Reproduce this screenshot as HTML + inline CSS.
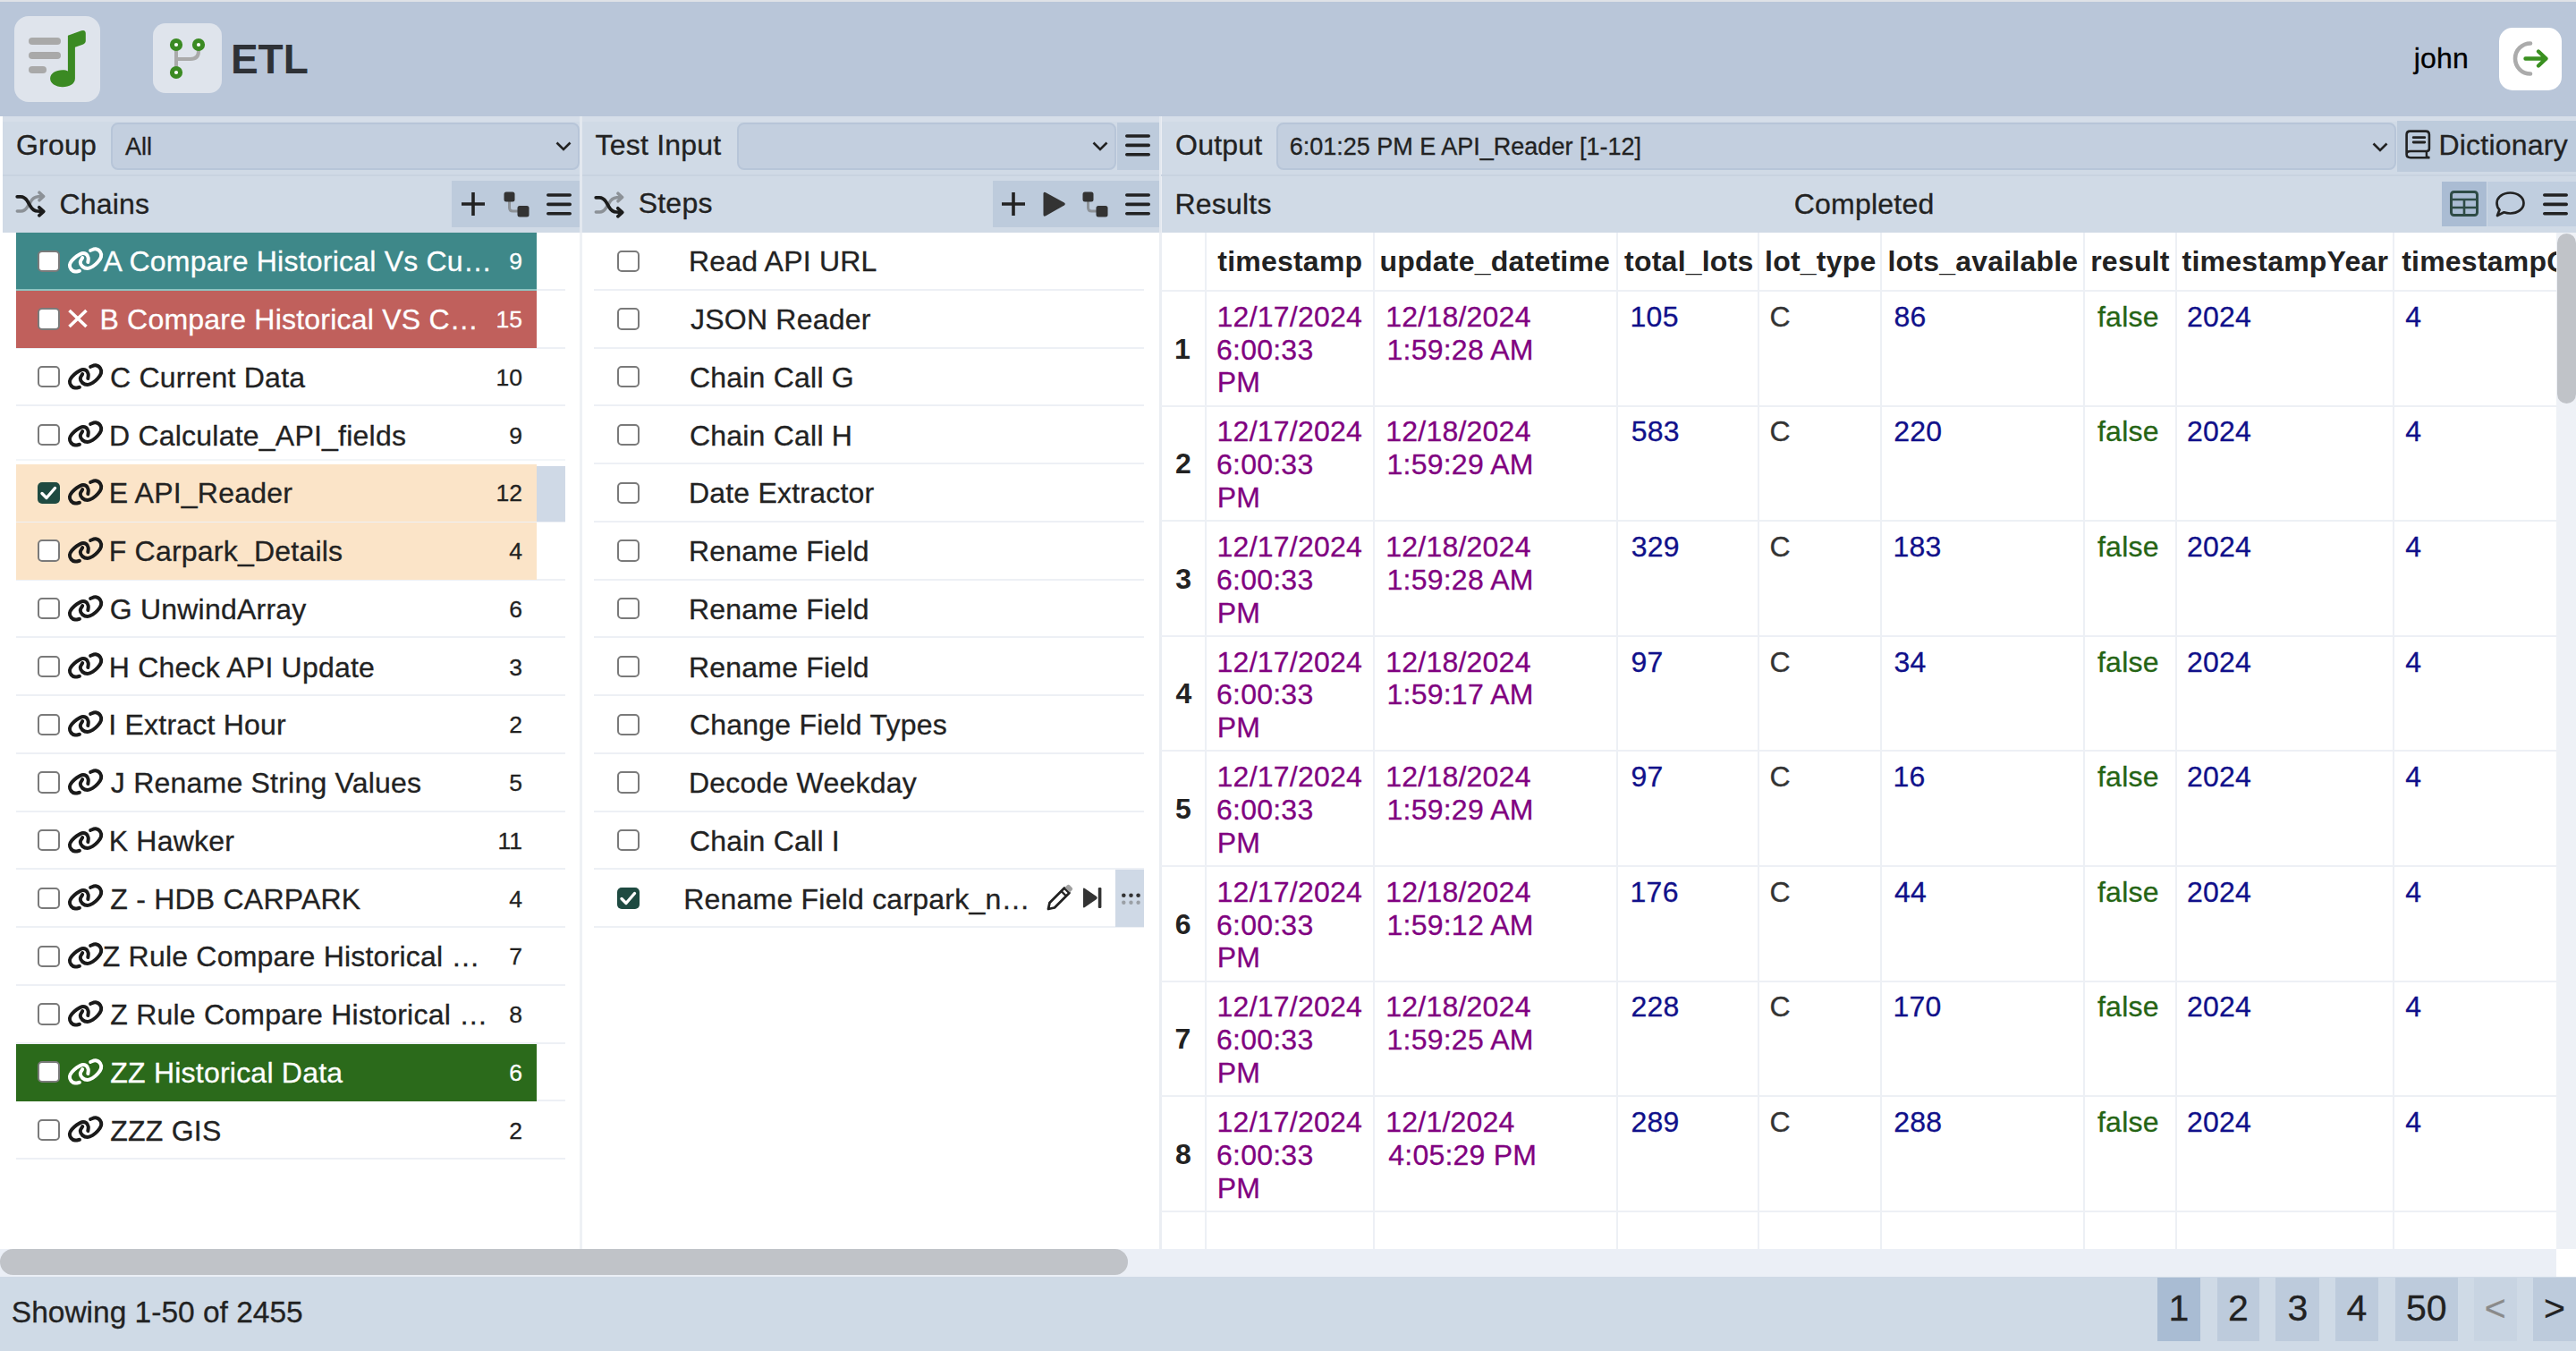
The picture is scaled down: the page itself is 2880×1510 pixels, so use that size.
<!DOCTYPE html>
<html><head><meta charset="utf-8"><style>
html,body{margin:0;padding:0;}
body{width:2880px;height:1510px;position:relative;overflow:hidden;background:#fff;font-family:"Liberation Sans",sans-serif;}
.t{position:absolute;white-space:pre;-webkit-text-stroke:0.3px currentColor;}
.r{position:absolute;}
</style></head><body>

<div class="r" style="left:0.0px;top:0.0px;width:2880.0px;height:2.0px;background:#dfe2e7;"></div>
<div class="r" style="left:0.0px;top:2.0px;width:2880.0px;height:128.0px;background:#b9c6d9;"></div>
<div class="r" style="left:16.0px;top:18.0px;width:96.0px;height:96.0px;background:#dfe4ec;border-radius:16px;"></div>
<svg class="r" style="left:16.0px;top:18.0px;width:96px;height:96px" viewBox="0 0 96 96">
<rect x="16" y="24" width="36" height="8" rx="4" fill="#a9a9a9"/>
<rect x="16" y="40" width="36" height="8" rx="4" fill="#a9a9a9"/>
<rect x="16" y="56" width="20" height="8" rx="4" fill="#a9a9a9"/>
<path d="M59.9 21.8 L75 16.2 Q79.8 14.8 79.8 19.5 L79.8 27.5 Q79.8 30.5 76.5 31.7 L67.9 34.8 L67.9 69.8 C67.9 76 61.5 79.2 54 79.2 C46 79.2 40.1 75 40.1 69.8 C40.1 64 46.5 60.3 54 60.3 C56.5 60.3 58.5 60.8 59.9 61.5 Z" fill="#3b8a23"/>
</svg>
<div class="r" style="left:171.0px;top:26.0px;width:77.0px;height:78.0px;background:#dfe4ec;border-radius:14px;"></div>
<svg class="r" style="left:171.0px;top:26.0px;width:77px;height:78px" viewBox="0 0 77 78">
<path d="M26 24 L26 55" stroke="#aaaaaa" stroke-width="4" fill="none"/>
<path d="M26 40 L42 40 Q51 40 51 31 L51 26" stroke="#aaaaaa" stroke-width="4" fill="none"/>
<circle cx="26" cy="24" r="4.6" fill="#fff" stroke="#3b8a23" stroke-width="5"/>
<circle cx="51" cy="24" r="4.6" fill="#fff" stroke="#3b8a23" stroke-width="5"/>
<circle cx="26" cy="55" r="4.6" fill="#fff" stroke="#3b8a23" stroke-width="5"/>
</svg>
<div class="t" style="left:257.9px;top:43.1px;font-size:46px;line-height:46px;font-weight:bold;-webkit-text-stroke:0;color:#2e3136;">ETL</div>
<div class="t" style="left:2698.7px;top:48.8px;font-size:32px;line-height:32px;letter-spacing:0.22px;color:#000;">john</div>
<div class="r" style="left:2794.0px;top:31.0px;width:70.0px;height:70.0px;background:#ffffff;border-radius:15px;"></div>
<svg class="r" style="left:2794.0px;top:31.0px;width:70px;height:70px" viewBox="0 0 70 70">
<path d="M35 17.5 A17 17 0 1 0 35 51.5" stroke="#ababab" stroke-width="4.6" fill="none" stroke-linecap="round"/>
<path d="M29.5 34.5 L52.5 34.5 M44 26.5 L52.5 34.5 L44 42.5" stroke="#3a9020" stroke-width="4.4" fill="none" stroke-linecap="round" stroke-linejoin="round"/>
</svg>
<div class="r" style="left:3.0px;top:130.0px;width:2877.0px;height:6.0px;background:#d6dee9;"></div>
<div class="r" style="left:3.0px;top:136.0px;width:2877.0px;height:124.0px;background:#d0dae6;"></div>
<div class="r" style="left:648.0px;top:130.0px;width:2.5px;height:1266.0px;background:#eef1f5;"></div>
<div class="r" style="left:1296.0px;top:130.0px;width:2.5px;height:1266.0px;background:#ebeef3;"></div>
<div class="r" style="left:3.0px;top:195.0px;width:2877.0px;height:2.0px;background:#c8d3e0;"></div>
<div class="r" style="left:648.0px;top:130.0px;width:3.0px;height:130.0px;background:#e3e8ef;"></div>
<div class="r" style="left:1296.0px;top:130.0px;width:2.0px;height:130.0px;background:#e3e8ef;"></div>
<div class="t" style="left:17.9px;top:145.9px;font-size:32px;line-height:32px;letter-spacing:0.22px;color:#222222;">Group</div>
<div class="r" style="left:124.0px;top:137.0px;width:523.5px;height:52.5px;background:#c3cfdf;border:2px solid #b7c5d8;border-radius:8px;box-sizing:border-box;"></div>
<div class="t" style="left:139.9px;top:150.9px;font-size:27px;line-height:27px;color:#222222;">All</div>
<svg class="r" style="left:620.5px;top:158.0px;width:18px;height:11px" viewBox="0 0 18 11"><path d="M1.5 1.5 L9 9 L16.5 1.5" stroke="#222" stroke-width="2.6" fill="none"/></svg>
<svg class="r" style="left:17.0px;top:213.0px;width:37px;height:31px" viewBox="0 0 37 31">
<path d="M2.3 23 L6.5 23 Q10.5 23 13.5 18.5 L17 13 Q20 7.3 25.5 6.8 L30.5 6.5" stroke="#8c9197" stroke-width="3.5" fill="none" stroke-linecap="round"/>
<path d="M27 2.2 L31.6 6.5 L27 10.8" stroke="#8c9197" stroke-width="3.5" fill="none" stroke-linecap="round" stroke-linejoin="round"/>
<path d="M2.2 6.8 L6 6.8 Q10.5 6.8 13.5 11.5 L17 17.5 Q20 22.8 25 23 L30.5 23.3" stroke="#1c1c1c" stroke-width="3.7" fill="none" stroke-linecap="round"/>
<path d="M26.8 18.8 L31.8 23.3 L26.8 27.8" stroke="#1c1c1c" stroke-width="3.7" fill="none" stroke-linecap="round" stroke-linejoin="round"/>
</svg>
<div class="t" style="left:66.4px;top:211.7px;font-size:32px;line-height:32px;letter-spacing:0.22px;color:#222222;">Chains</div>
<div class="r" style="left:505.0px;top:202.0px;width:142.5px;height:51.5px;background:#bdcbdc;"></div>
<svg class="r" style="left:516.0px;top:215.0px;width:26px;height:26px" viewBox="0 0 26 26"><path d="M13 0 L13 26 M0 13 L26 13" stroke="#222" stroke-width="3.6"/></svg>
<svg class="r" style="left:563.0px;top:214.0px;width:29px;height:29px" viewBox="0 0 29 29"><path d="M6.5 8 L6.5 18 Q6.5 22 10.5 22 L18 22" stroke="#8d9297" stroke-width="3" fill="none"/>
<rect x="0.5" y="0.5" width="12" height="11" rx="2.5" fill="#333"/>
<rect x="15.5" y="16" width="13" height="12.5" rx="2.5" fill="#333"/></svg>
<svg class="r" style="left:608.6px;top:213.6px;width:32px;height:30px" viewBox="0 0 32 30"><path d="M3.8 4 L28.2 4 M3.8 14.4 L28.2 14.4 M3.8 24.7 L28.2 24.7" stroke="#222" stroke-width="3.6" stroke-linecap="round"/></svg>
<div class="t" style="left:665.5px;top:146.4px;font-size:32px;line-height:32px;letter-spacing:0.22px;color:#222222;">Test Input</div>
<div class="r" style="left:823.5px;top:137.0px;width:424.1px;height:52.5px;background:#c3cfdf;border:2px solid #b7c5d8;border-radius:8px;box-sizing:border-box;"></div>
<svg class="r" style="left:1220.5px;top:158.0px;width:18px;height:11px" viewBox="0 0 18 11"><path d="M1.5 1.5 L9 9 L16.5 1.5" stroke="#222" stroke-width="2.6" fill="none"/></svg>
<div class="r" style="left:1249.0px;top:137.0px;width:47.0px;height:52.5px;background:#bdcbdc;"></div>
<svg class="r" style="left:1256.0px;top:148.4px;width:32px;height:30px" viewBox="0 0 32 30"><path d="M3.8 4 L28.2 4 M3.8 14.4 L28.2 14.4 M3.8 24.7 L28.2 24.7" stroke="#222" stroke-width="3.6" stroke-linecap="round"/></svg>
<svg class="r" style="left:664.0px;top:214.0px;width:37px;height:31px" viewBox="0 0 37 31">
<path d="M2.3 23 L6.5 23 Q10.5 23 13.5 18.5 L17 13 Q20 7.3 25.5 6.8 L30.5 6.5" stroke="#8c9197" stroke-width="3.5" fill="none" stroke-linecap="round"/>
<path d="M27 2.2 L31.6 6.5 L27 10.8" stroke="#8c9197" stroke-width="3.5" fill="none" stroke-linecap="round" stroke-linejoin="round"/>
<path d="M2.2 6.8 L6 6.8 Q10.5 6.8 13.5 11.5 L17 17.5 Q20 22.8 25 23 L30.5 23.3" stroke="#1c1c1c" stroke-width="3.7" fill="none" stroke-linecap="round"/>
<path d="M26.8 18.8 L31.8 23.3 L26.8 27.8" stroke="#1c1c1c" stroke-width="3.7" fill="none" stroke-linecap="round" stroke-linejoin="round"/>
</svg>
<div class="t" style="left:713.7px;top:210.7px;font-size:32px;line-height:32px;letter-spacing:0.22px;color:#222222;">Steps</div>
<div class="r" style="left:1109.7px;top:202.0px;width:186.3px;height:51.5px;background:#bdcbdc;"></div>
<svg class="r" style="left:1120.0px;top:215.0px;width:26px;height:26px" viewBox="0 0 26 26"><path d="M13 0 L13 26 M0 13 L26 13" stroke="#222" stroke-width="3.6"/></svg>
<svg class="r" style="left:1165.0px;top:213.0px;width:28px;height:31px" viewBox="0 0 28 31"><path d="M1.5 3.5 Q1.5 0.8 4.2 2.2 L24.8 13.5 Q26.8 15 24.8 16.5 L4.2 28.3 Q1.5 29.7 1.5 27 Z" fill="#333"/></svg>
<svg class="r" style="left:1210.0px;top:214.0px;width:29px;height:29px" viewBox="0 0 29 29"><path d="M6.5 8 L6.5 18 Q6.5 22 10.5 22 L18 22" stroke="#8d9297" stroke-width="3" fill="none"/>
<rect x="0.5" y="0.5" width="12" height="11" rx="2.5" fill="#333"/>
<rect x="15.5" y="16" width="13" height="12.5" rx="2.5" fill="#333"/></svg>
<svg class="r" style="left:1256.0px;top:213.8px;width:32px;height:30px" viewBox="0 0 32 30"><path d="M3.8 4 L28.2 4 M3.8 14.4 L28.2 14.4 M3.8 24.7 L28.2 24.7" stroke="#222" stroke-width="3.6" stroke-linecap="round"/></svg>
<div class="t" style="left:1314.1px;top:145.8px;font-size:32px;line-height:32px;letter-spacing:0.22px;color:#222222;">Output</div>
<div class="r" style="left:1427.4px;top:137.0px;width:1252.1px;height:52.5px;background:#c3cfdf;border:2px solid #b7c5d8;border-radius:8px;box-sizing:border-box;"></div>
<div class="t" style="left:1441.7px;top:150.5px;font-size:27px;line-height:27px;color:#222222;">6:01:25 PM E API_Reader [1-12]</div>
<svg class="r" style="left:2652.0px;top:158.5px;width:18px;height:11px" viewBox="0 0 18 11"><path d="M1.5 1.5 L9 9 L16.5 1.5" stroke="#222" stroke-width="2.6" fill="none"/></svg>
<div class="r" style="left:2679.5px;top:135.0px;width:200.5px;height:56.5px;background:#bdcbdc;"></div>
<svg class="r" style="left:2688.0px;top:145.0px;width:31px;height:33px" viewBox="0 0 31 33">
<path d="M2.6 28 L2.6 5.5 Q2.6 1.6 6.5 1.6 L24 1.6 Q27.9 1.6 27.9 5.5 L27.9 21 Q27.9 24 25 24 L7 24 Q2.6 24 2.6 27.6 Q2.6 31.2 7 31.2 L28.5 31.2" stroke="#222" stroke-width="2.6" fill="none" stroke-linejoin="round"/>
<path d="M24.9 24 L24.9 30 L28 31.2" stroke="#222" stroke-width="2.4" fill="none"/>
<path d="M10.2 8.7 L22.8 8.7 M10.2 14 L22.8 14" stroke="#222" stroke-width="2.8" stroke-linecap="round"/>
</svg>
<div class="t" style="left:2726.4px;top:146.4px;font-size:32px;line-height:32px;letter-spacing:0.22px;color:#222222;">Dictionary</div>
<div class="t" style="left:1313.4px;top:211.9px;font-size:32px;line-height:32px;letter-spacing:0.22px;color:#222222;">Results</div>
<div class="t" style="left:2005.7px;top:211.9px;font-size:32px;line-height:32px;letter-spacing:0.22px;color:#222222;">Completed</div>
<div class="r" style="left:2729.6px;top:202.7px;width:50.9px;height:50.6px;background:#aabcd3;"></div>
<div class="r" style="left:2780.5px;top:202.7px;width:99.5px;height:50.6px;background:#c0cedf;"></div>
<svg class="r" style="left:2738.0px;top:212.0px;width:34px;height:31px" viewBox="0 0 34 31"><rect x="2.5" y="2.5" width="29" height="26" rx="3" stroke="#2e4b45" stroke-width="3" fill="none"/>
<path d="M2.5 11 L31.5 11 M2.5 20 L31.5 20 M17 11 L17 28.5" stroke="#2e4b45" stroke-width="2.6"/></svg>
<svg class="r" style="left:2789.0px;top:213.0px;width:35px;height:31px" viewBox="0 0 35 31"><path d="M17.5 2.5 C26 2.5 32.5 7.5 32.5 14 C32.5 20.5 26 25.5 17.5 25.5 C15 25.5 12.5 25 10.5 24.3 L3 28 L5.5 21.5 C3.5 19.5 2.5 17 2.5 14 C2.5 7.5 9 2.5 17.5 2.5 Z" stroke="#222" stroke-width="2.7" fill="none" stroke-linejoin="round"/></svg>
<svg class="r" style="left:2841.0px;top:213.6px;width:32px;height:30px" viewBox="0 0 32 30"><path d="M3.8 4 L28.2 4 M3.8 14.4 L28.2 14.4 M3.8 24.7 L28.2 24.7" stroke="#222" stroke-width="3.6" stroke-linecap="round"/></svg>
<div class="r" style="left:18.0px;top:322.8px;width:614.0px;height:2.0px;background:#edf0f5;"></div>
<div class="r" style="left:18.0px;top:260.0px;width:582.0px;height:64.2px;background:#3e8889;"></div>
<div class="r" style="left:18.0px;top:322.8px;width:582.0px;height:2.0px;background:#8ec3c0;"></div>
<div class="r" style="left:42.2px;top:279.6px;width:24.4px;height:24.4px;background:#fff;border:2.2px solid #7a7a7a;border-radius:5px;box-sizing:border-box;"></div>
<svg class="r" style="left:70.0px;top:270.0px;width:50px;height:42px" viewBox="0 0 50 42"><g stroke="#fff" stroke-width="4.0" fill="none" stroke-linecap="round" stroke-linejoin="round">
<path d="M18.93 32.76 C18.12 32.89 15.61 33.84 14.05 33.57 C12.49 33.30 10.59 32.35 9.57 31.13 C8.55 29.91 7.81 27.87 7.94 26.24 C8.08 24.61 9.09 22.99 10.38 21.36 C11.67 19.73 13.84 17.83 15.67 16.47 C17.50 15.11 19.61 13.62 21.37 13.21 C23.14 12.80 25.04 13.21 26.26 14.03 C27.48 14.84 28.36 16.61 28.70 18.10 C29.04 19.59 28.37 22.17 28.30 22.99"/><path d="M31.15 9.96 C32.10 9.69 35.02 8.06 36.85 8.33 C38.68 8.60 41.12 10.10 42.14 11.59 C43.16 13.08 43.43 15.39 42.95 17.29 C42.48 19.19 40.85 21.23 39.29 22.99 C37.73 24.75 35.49 26.72 33.59 27.87 C31.69 29.02 29.79 29.91 27.89 29.91 C25.99 29.91 23.55 29.02 22.19 27.87 C20.83 26.72 19.75 24.62 19.75 22.99 C19.75 21.36 21.78 18.91 22.19 18.10"/></g></svg>
<div class="t" style="left:115.6px;top:276.2px;font-size:32px;line-height:32px;letter-spacing:0.22px;color:#fff;">A Compare Historical Vs Cu…</div>
<div class="t" style="right:2296.0px;top:279.4px;font-size:26.5px;line-height:26.5px;color:#fff;">9</div>
<div class="r" style="left:18.0px;top:387.5px;width:614.0px;height:2.0px;background:#edf0f5;"></div>
<div class="r" style="left:18.0px;top:324.8px;width:582.0px;height:64.2px;background:#c0605c;"></div>
<div class="r" style="left:42.2px;top:344.4px;width:24.4px;height:24.4px;background:#fff;border:2.2px solid #7a7a7a;border-radius:5px;box-sizing:border-box;"></div>
<svg class="r" style="left:75.0px;top:344.8px;width:24px;height:22px" viewBox="0 0 24 22"><path d="M2.5 2 L21.5 20 M21.5 2 L2.5 20" stroke="#fff" stroke-width="3.6"/></svg>
<div class="t" style="left:111.4px;top:341.0px;font-size:32px;line-height:32px;letter-spacing:0.22px;color:#fff;">B Compare Historical VS C…</div>
<div class="t" style="right:2296.0px;top:344.1px;font-size:26.5px;line-height:26.5px;color:#fff;">15</div>
<div class="r" style="left:18.0px;top:452.2px;width:614.0px;height:2.0px;background:#edf0f5;"></div>
<div class="r" style="left:42.2px;top:409.1px;width:24.4px;height:24.4px;background:#fff;border:2.2px solid #7a7a7a;border-radius:5px;box-sizing:border-box;"></div>
<svg class="r" style="left:70.0px;top:399.5px;width:50px;height:42px" viewBox="0 0 50 42"><g stroke="#1a1a1a" stroke-width="4.0" fill="none" stroke-linecap="round" stroke-linejoin="round">
<path d="M18.93 32.76 C18.12 32.89 15.61 33.84 14.05 33.57 C12.49 33.30 10.59 32.35 9.57 31.13 C8.55 29.91 7.81 27.87 7.94 26.24 C8.08 24.61 9.09 22.99 10.38 21.36 C11.67 19.73 13.84 17.83 15.67 16.47 C17.50 15.11 19.61 13.62 21.37 13.21 C23.14 12.80 25.04 13.21 26.26 14.03 C27.48 14.84 28.36 16.61 28.70 18.10 C29.04 19.59 28.37 22.17 28.30 22.99"/><path d="M31.15 9.96 C32.10 9.69 35.02 8.06 36.85 8.33 C38.68 8.60 41.12 10.10 42.14 11.59 C43.16 13.08 43.43 15.39 42.95 17.29 C42.48 19.19 40.85 21.23 39.29 22.99 C37.73 24.75 35.49 26.72 33.59 27.87 C31.69 29.02 29.79 29.91 27.89 29.91 C25.99 29.91 23.55 29.02 22.19 27.87 C20.83 26.72 19.75 24.62 19.75 22.99 C19.75 21.36 21.78 18.91 22.19 18.10"/></g></svg>
<div class="t" style="left:123.0px;top:405.7px;font-size:32px;line-height:32px;letter-spacing:0.22px;color:#222222;">C Current Data</div>
<div class="t" style="right:2296.0px;top:408.9px;font-size:26.5px;line-height:26.5px;color:#222222;">10</div>
<div class="r" style="left:18.0px;top:513.0px;width:614.0px;height:2.0px;background:#f2f5f8;"></div>
<div class="r" style="left:42.2px;top:473.9px;width:24.4px;height:24.4px;background:#fff;border:2.2px solid #7a7a7a;border-radius:5px;box-sizing:border-box;"></div>
<svg class="r" style="left:70.0px;top:464.2px;width:50px;height:42px" viewBox="0 0 50 42"><g stroke="#1a1a1a" stroke-width="4.0" fill="none" stroke-linecap="round" stroke-linejoin="round">
<path d="M18.93 32.76 C18.12 32.89 15.61 33.84 14.05 33.57 C12.49 33.30 10.59 32.35 9.57 31.13 C8.55 29.91 7.81 27.87 7.94 26.24 C8.08 24.61 9.09 22.99 10.38 21.36 C11.67 19.73 13.84 17.83 15.67 16.47 C17.50 15.11 19.61 13.62 21.37 13.21 C23.14 12.80 25.04 13.21 26.26 14.03 C27.48 14.84 28.36 16.61 28.70 18.10 C29.04 19.59 28.37 22.17 28.30 22.99"/><path d="M31.15 9.96 C32.10 9.69 35.02 8.06 36.85 8.33 C38.68 8.60 41.12 10.10 42.14 11.59 C43.16 13.08 43.43 15.39 42.95 17.29 C42.48 19.19 40.85 21.23 39.29 22.99 C37.73 24.75 35.49 26.72 33.59 27.87 C31.69 29.02 29.79 29.91 27.89 29.91 C25.99 29.91 23.55 29.02 22.19 27.87 C20.83 26.72 19.75 24.62 19.75 22.99 C19.75 21.36 21.78 18.91 22.19 18.10"/></g></svg>
<div class="t" style="left:122.0px;top:470.5px;font-size:32px;line-height:32px;letter-spacing:0.22px;color:#222222;">D Calculate_API_fields</div>
<div class="t" style="right:2296.0px;top:473.6px;font-size:26.5px;line-height:26.5px;color:#222222;">9</div>
<div class="r" style="left:18.0px;top:581.8px;width:614.0px;height:2.0px;background:#edf0f5;"></div>
<div class="r" style="left:18.0px;top:519.0px;width:582.0px;height:64.2px;background:#fbe4c8;"></div>
<div class="r" style="left:42.2px;top:538.6px;width:24.4px;height:24.4px;background:#1e4a41;border-radius:5px;"></div>
<svg class="r" style="left:42.2px;top:538.6px;width:24.4px;height:24.4px" viewBox="0 0 24.4 24.4"><path d="M5 12.5 L10 17.5 L19.5 6.5" stroke="#fff" stroke-width="3.4" fill="none" stroke-linecap="round" stroke-linejoin="round"/></svg>
<svg class="r" style="left:70.0px;top:529.0px;width:50px;height:42px" viewBox="0 0 50 42"><g stroke="#1a1a1a" stroke-width="4.0" fill="none" stroke-linecap="round" stroke-linejoin="round">
<path d="M18.93 32.76 C18.12 32.89 15.61 33.84 14.05 33.57 C12.49 33.30 10.59 32.35 9.57 31.13 C8.55 29.91 7.81 27.87 7.94 26.24 C8.08 24.61 9.09 22.99 10.38 21.36 C11.67 19.73 13.84 17.83 15.67 16.47 C17.50 15.11 19.61 13.62 21.37 13.21 C23.14 12.80 25.04 13.21 26.26 14.03 C27.48 14.84 28.36 16.61 28.70 18.10 C29.04 19.59 28.37 22.17 28.30 22.99"/><path d="M31.15 9.96 C32.10 9.69 35.02 8.06 36.85 8.33 C38.68 8.60 41.12 10.10 42.14 11.59 C43.16 13.08 43.43 15.39 42.95 17.29 C42.48 19.19 40.85 21.23 39.29 22.99 C37.73 24.75 35.49 26.72 33.59 27.87 C31.69 29.02 29.79 29.91 27.89 29.91 C25.99 29.91 23.55 29.02 22.19 27.87 C20.83 26.72 19.75 24.62 19.75 22.99 C19.75 21.36 21.78 18.91 22.19 18.10"/></g></svg>
<div class="t" style="left:121.7px;top:535.2px;font-size:32px;line-height:32px;letter-spacing:0.22px;color:#222222;">E API_Reader</div>
<div class="t" style="right:2296.0px;top:538.4px;font-size:26.5px;line-height:26.5px;color:#222222;">12</div>
<div class="r" style="left:600.0px;top:520.5px;width:32.3px;height:62.8px;background:#cfd9e6;"></div>
<div class="r" style="left:18.0px;top:646.5px;width:614.0px;height:2.0px;background:#edf0f5;"></div>
<div class="r" style="left:18.0px;top:583.8px;width:582.0px;height:64.2px;background:#fbe4c8;"></div>
<div class="r" style="left:42.2px;top:603.4px;width:24.4px;height:24.4px;background:#fff;border:2.2px solid #7a7a7a;border-radius:5px;box-sizing:border-box;"></div>
<svg class="r" style="left:70.0px;top:593.8px;width:50px;height:42px" viewBox="0 0 50 42"><g stroke="#1a1a1a" stroke-width="4.0" fill="none" stroke-linecap="round" stroke-linejoin="round">
<path d="M18.93 32.76 C18.12 32.89 15.61 33.84 14.05 33.57 C12.49 33.30 10.59 32.35 9.57 31.13 C8.55 29.91 7.81 27.87 7.94 26.24 C8.08 24.61 9.09 22.99 10.38 21.36 C11.67 19.73 13.84 17.83 15.67 16.47 C17.50 15.11 19.61 13.62 21.37 13.21 C23.14 12.80 25.04 13.21 26.26 14.03 C27.48 14.84 28.36 16.61 28.70 18.10 C29.04 19.59 28.37 22.17 28.30 22.99"/><path d="M31.15 9.96 C32.10 9.69 35.02 8.06 36.85 8.33 C38.68 8.60 41.12 10.10 42.14 11.59 C43.16 13.08 43.43 15.39 42.95 17.29 C42.48 19.19 40.85 21.23 39.29 22.99 C37.73 24.75 35.49 26.72 33.59 27.87 C31.69 29.02 29.79 29.91 27.89 29.91 C25.99 29.91 23.55 29.02 22.19 27.87 C20.83 26.72 19.75 24.62 19.75 22.99 C19.75 21.36 21.78 18.91 22.19 18.10"/></g></svg>
<div class="t" style="left:121.7px;top:600.0px;font-size:32px;line-height:32px;letter-spacing:0.22px;color:#222222;">F Carpark_Details</div>
<div class="t" style="right:2296.0px;top:603.1px;font-size:26.5px;line-height:26.5px;color:#222222;">4</div>
<div class="r" style="left:18.0px;top:711.2px;width:614.0px;height:2.0px;background:#edf0f5;"></div>
<div class="r" style="left:42.2px;top:668.1px;width:24.4px;height:24.4px;background:#fff;border:2.2px solid #7a7a7a;border-radius:5px;box-sizing:border-box;"></div>
<svg class="r" style="left:70.0px;top:658.5px;width:50px;height:42px" viewBox="0 0 50 42"><g stroke="#1a1a1a" stroke-width="4.0" fill="none" stroke-linecap="round" stroke-linejoin="round">
<path d="M18.93 32.76 C18.12 32.89 15.61 33.84 14.05 33.57 C12.49 33.30 10.59 32.35 9.57 31.13 C8.55 29.91 7.81 27.87 7.94 26.24 C8.08 24.61 9.09 22.99 10.38 21.36 C11.67 19.73 13.84 17.83 15.67 16.47 C17.50 15.11 19.61 13.62 21.37 13.21 C23.14 12.80 25.04 13.21 26.26 14.03 C27.48 14.84 28.36 16.61 28.70 18.10 C29.04 19.59 28.37 22.17 28.30 22.99"/><path d="M31.15 9.96 C32.10 9.69 35.02 8.06 36.85 8.33 C38.68 8.60 41.12 10.10 42.14 11.59 C43.16 13.08 43.43 15.39 42.95 17.29 C42.48 19.19 40.85 21.23 39.29 22.99 C37.73 24.75 35.49 26.72 33.59 27.87 C31.69 29.02 29.79 29.91 27.89 29.91 C25.99 29.91 23.55 29.02 22.19 27.87 C20.83 26.72 19.75 24.62 19.75 22.99 C19.75 21.36 21.78 18.91 22.19 18.10"/></g></svg>
<div class="t" style="left:122.7px;top:664.7px;font-size:32px;line-height:32px;letter-spacing:0.22px;color:#222222;">G UnwindArray</div>
<div class="t" style="right:2296.0px;top:667.9px;font-size:26.5px;line-height:26.5px;color:#222222;">6</div>
<div class="r" style="left:18.0px;top:776.0px;width:614.0px;height:2.0px;background:#edf0f5;"></div>
<div class="r" style="left:42.2px;top:732.9px;width:24.4px;height:24.4px;background:#fff;border:2.2px solid #7a7a7a;border-radius:5px;box-sizing:border-box;"></div>
<svg class="r" style="left:70.0px;top:723.2px;width:50px;height:42px" viewBox="0 0 50 42"><g stroke="#1a1a1a" stroke-width="4.0" fill="none" stroke-linecap="round" stroke-linejoin="round">
<path d="M18.93 32.76 C18.12 32.89 15.61 33.84 14.05 33.57 C12.49 33.30 10.59 32.35 9.57 31.13 C8.55 29.91 7.81 27.87 7.94 26.24 C8.08 24.61 9.09 22.99 10.38 21.36 C11.67 19.73 13.84 17.83 15.67 16.47 C17.50 15.11 19.61 13.62 21.37 13.21 C23.14 12.80 25.04 13.21 26.26 14.03 C27.48 14.84 28.36 16.61 28.70 18.10 C29.04 19.59 28.37 22.17 28.30 22.99"/><path d="M31.15 9.96 C32.10 9.69 35.02 8.06 36.85 8.33 C38.68 8.60 41.12 10.10 42.14 11.59 C43.16 13.08 43.43 15.39 42.95 17.29 C42.48 19.19 40.85 21.23 39.29 22.99 C37.73 24.75 35.49 26.72 33.59 27.87 C31.69 29.02 29.79 29.91 27.89 29.91 C25.99 29.91 23.55 29.02 22.19 27.87 C20.83 26.72 19.75 24.62 19.75 22.99 C19.75 21.36 21.78 18.91 22.19 18.10"/></g></svg>
<div class="t" style="left:121.7px;top:729.5px;font-size:32px;line-height:32px;letter-spacing:0.22px;color:#222222;">H Check API Update</div>
<div class="t" style="right:2296.0px;top:732.6px;font-size:26.5px;line-height:26.5px;color:#222222;">3</div>
<div class="r" style="left:18.0px;top:840.8px;width:614.0px;height:2.0px;background:#edf0f5;"></div>
<div class="r" style="left:42.2px;top:797.6px;width:24.4px;height:24.4px;background:#fff;border:2.2px solid #7a7a7a;border-radius:5px;box-sizing:border-box;"></div>
<svg class="r" style="left:70.0px;top:788.0px;width:50px;height:42px" viewBox="0 0 50 42"><g stroke="#1a1a1a" stroke-width="4.0" fill="none" stroke-linecap="round" stroke-linejoin="round">
<path d="M18.93 32.76 C18.12 32.89 15.61 33.84 14.05 33.57 C12.49 33.30 10.59 32.35 9.57 31.13 C8.55 29.91 7.81 27.87 7.94 26.24 C8.08 24.61 9.09 22.99 10.38 21.36 C11.67 19.73 13.84 17.83 15.67 16.47 C17.50 15.11 19.61 13.62 21.37 13.21 C23.14 12.80 25.04 13.21 26.26 14.03 C27.48 14.84 28.36 16.61 28.70 18.10 C29.04 19.59 28.37 22.17 28.30 22.99"/><path d="M31.15 9.96 C32.10 9.69 35.02 8.06 36.85 8.33 C38.68 8.60 41.12 10.10 42.14 11.59 C43.16 13.08 43.43 15.39 42.95 17.29 C42.48 19.19 40.85 21.23 39.29 22.99 C37.73 24.75 35.49 26.72 33.59 27.87 C31.69 29.02 29.79 29.91 27.89 29.91 C25.99 29.91 23.55 29.02 22.19 27.87 C20.83 26.72 19.75 24.62 19.75 22.99 C19.75 21.36 21.78 18.91 22.19 18.10"/></g></svg>
<div class="t" style="left:121.3px;top:794.2px;font-size:32px;line-height:32px;letter-spacing:0.22px;color:#222222;">I Extract Hour</div>
<div class="t" style="right:2296.0px;top:797.4px;font-size:26.5px;line-height:26.5px;color:#222222;">2</div>
<div class="r" style="left:18.0px;top:905.5px;width:614.0px;height:2.0px;background:#edf0f5;"></div>
<div class="r" style="left:42.2px;top:862.4px;width:24.4px;height:24.4px;background:#fff;border:2.2px solid #7a7a7a;border-radius:5px;box-sizing:border-box;"></div>
<svg class="r" style="left:70.0px;top:852.8px;width:50px;height:42px" viewBox="0 0 50 42"><g stroke="#1a1a1a" stroke-width="4.0" fill="none" stroke-linecap="round" stroke-linejoin="round">
<path d="M18.93 32.76 C18.12 32.89 15.61 33.84 14.05 33.57 C12.49 33.30 10.59 32.35 9.57 31.13 C8.55 29.91 7.81 27.87 7.94 26.24 C8.08 24.61 9.09 22.99 10.38 21.36 C11.67 19.73 13.84 17.83 15.67 16.47 C17.50 15.11 19.61 13.62 21.37 13.21 C23.14 12.80 25.04 13.21 26.26 14.03 C27.48 14.84 28.36 16.61 28.70 18.10 C29.04 19.59 28.37 22.17 28.30 22.99"/><path d="M31.15 9.96 C32.10 9.69 35.02 8.06 36.85 8.33 C38.68 8.60 41.12 10.10 42.14 11.59 C43.16 13.08 43.43 15.39 42.95 17.29 C42.48 19.19 40.85 21.23 39.29 22.99 C37.73 24.75 35.49 26.72 33.59 27.87 C31.69 29.02 29.79 29.91 27.89 29.91 C25.99 29.91 23.55 29.02 22.19 27.87 C20.83 26.72 19.75 24.62 19.75 22.99 C19.75 21.36 21.78 18.91 22.19 18.10"/></g></svg>
<div class="t" style="left:123.8px;top:859.0px;font-size:32px;line-height:32px;letter-spacing:0.22px;color:#222222;">J Rename String Values</div>
<div class="t" style="right:2296.0px;top:862.1px;font-size:26.5px;line-height:26.5px;color:#222222;">5</div>
<div class="r" style="left:18.0px;top:970.2px;width:614.0px;height:2.0px;background:#edf0f5;"></div>
<div class="r" style="left:42.2px;top:927.1px;width:24.4px;height:24.4px;background:#fff;border:2.2px solid #7a7a7a;border-radius:5px;box-sizing:border-box;"></div>
<svg class="r" style="left:70.0px;top:917.5px;width:50px;height:42px" viewBox="0 0 50 42"><g stroke="#1a1a1a" stroke-width="4.0" fill="none" stroke-linecap="round" stroke-linejoin="round">
<path d="M18.93 32.76 C18.12 32.89 15.61 33.84 14.05 33.57 C12.49 33.30 10.59 32.35 9.57 31.13 C8.55 29.91 7.81 27.87 7.94 26.24 C8.08 24.61 9.09 22.99 10.38 21.36 C11.67 19.73 13.84 17.83 15.67 16.47 C17.50 15.11 19.61 13.62 21.37 13.21 C23.14 12.80 25.04 13.21 26.26 14.03 C27.48 14.84 28.36 16.61 28.70 18.10 C29.04 19.59 28.37 22.17 28.30 22.99"/><path d="M31.15 9.96 C32.10 9.69 35.02 8.06 36.85 8.33 C38.68 8.60 41.12 10.10 42.14 11.59 C43.16 13.08 43.43 15.39 42.95 17.29 C42.48 19.19 40.85 21.23 39.29 22.99 C37.73 24.75 35.49 26.72 33.59 27.87 C31.69 29.02 29.79 29.91 27.89 29.91 C25.99 29.91 23.55 29.02 22.19 27.87 C20.83 26.72 19.75 24.62 19.75 22.99 C19.75 21.36 21.78 18.91 22.19 18.10"/></g></svg>
<div class="t" style="left:121.7px;top:923.7px;font-size:32px;line-height:32px;letter-spacing:0.22px;color:#222222;">K Hawker</div>
<div class="t" style="right:2296.0px;top:926.9px;font-size:26.5px;line-height:26.5px;color:#222222;">11</div>
<div class="r" style="left:18.0px;top:1035.0px;width:614.0px;height:2.0px;background:#edf0f5;"></div>
<div class="r" style="left:42.2px;top:991.9px;width:24.4px;height:24.4px;background:#fff;border:2.2px solid #7a7a7a;border-radius:5px;box-sizing:border-box;"></div>
<svg class="r" style="left:70.0px;top:982.2px;width:50px;height:42px" viewBox="0 0 50 42"><g stroke="#1a1a1a" stroke-width="4.0" fill="none" stroke-linecap="round" stroke-linejoin="round">
<path d="M18.93 32.76 C18.12 32.89 15.61 33.84 14.05 33.57 C12.49 33.30 10.59 32.35 9.57 31.13 C8.55 29.91 7.81 27.87 7.94 26.24 C8.08 24.61 9.09 22.99 10.38 21.36 C11.67 19.73 13.84 17.83 15.67 16.47 C17.50 15.11 19.61 13.62 21.37 13.21 C23.14 12.80 25.04 13.21 26.26 14.03 C27.48 14.84 28.36 16.61 28.70 18.10 C29.04 19.59 28.37 22.17 28.30 22.99"/><path d="M31.15 9.96 C32.10 9.69 35.02 8.06 36.85 8.33 C38.68 8.60 41.12 10.10 42.14 11.59 C43.16 13.08 43.43 15.39 42.95 17.29 C42.48 19.19 40.85 21.23 39.29 22.99 C37.73 24.75 35.49 26.72 33.59 27.87 C31.69 29.02 29.79 29.91 27.89 29.91 C25.99 29.91 23.55 29.02 22.19 27.87 C20.83 26.72 19.75 24.62 19.75 22.99 C19.75 21.36 21.78 18.91 22.19 18.10"/></g></svg>
<div class="t" style="left:123.3px;top:988.5px;font-size:32px;line-height:32px;letter-spacing:0.22px;color:#222222;">Z - HDB CARPARK</div>
<div class="t" style="right:2296.0px;top:991.6px;font-size:26.5px;line-height:26.5px;color:#222222;">4</div>
<div class="r" style="left:18.0px;top:1099.8px;width:614.0px;height:2.0px;background:#edf0f5;"></div>
<div class="r" style="left:42.2px;top:1056.6px;width:24.4px;height:24.4px;background:#fff;border:2.2px solid #7a7a7a;border-radius:5px;box-sizing:border-box;"></div>
<svg class="r" style="left:70.0px;top:1047.0px;width:50px;height:42px" viewBox="0 0 50 42"><g stroke="#1a1a1a" stroke-width="4.0" fill="none" stroke-linecap="round" stroke-linejoin="round">
<path d="M18.93 32.76 C18.12 32.89 15.61 33.84 14.05 33.57 C12.49 33.30 10.59 32.35 9.57 31.13 C8.55 29.91 7.81 27.87 7.94 26.24 C8.08 24.61 9.09 22.99 10.38 21.36 C11.67 19.73 13.84 17.83 15.67 16.47 C17.50 15.11 19.61 13.62 21.37 13.21 C23.14 12.80 25.04 13.21 26.26 14.03 C27.48 14.84 28.36 16.61 28.70 18.10 C29.04 19.59 28.37 22.17 28.30 22.99"/><path d="M31.15 9.96 C32.10 9.69 35.02 8.06 36.85 8.33 C38.68 8.60 41.12 10.10 42.14 11.59 C43.16 13.08 43.43 15.39 42.95 17.29 C42.48 19.19 40.85 21.23 39.29 22.99 C37.73 24.75 35.49 26.72 33.59 27.87 C31.69 29.02 29.79 29.91 27.89 29.91 C25.99 29.91 23.55 29.02 22.19 27.87 C20.83 26.72 19.75 24.62 19.75 22.99 C19.75 21.36 21.78 18.91 22.19 18.10"/></g></svg>
<div class="t" style="left:114.7px;top:1053.2px;font-size:32px;line-height:32px;letter-spacing:0.22px;color:#222222;">Z Rule Compare Historical …</div>
<div class="t" style="right:2296.0px;top:1056.4px;font-size:26.5px;line-height:26.5px;color:#222222;">7</div>
<div class="r" style="left:18.0px;top:1164.5px;width:614.0px;height:2.0px;background:#edf0f5;"></div>
<div class="r" style="left:42.2px;top:1121.3px;width:24.4px;height:24.4px;background:#fff;border:2.2px solid #7a7a7a;border-radius:5px;box-sizing:border-box;"></div>
<svg class="r" style="left:70.0px;top:1111.8px;width:50px;height:42px" viewBox="0 0 50 42"><g stroke="#1a1a1a" stroke-width="4.0" fill="none" stroke-linecap="round" stroke-linejoin="round">
<path d="M18.93 32.76 C18.12 32.89 15.61 33.84 14.05 33.57 C12.49 33.30 10.59 32.35 9.57 31.13 C8.55 29.91 7.81 27.87 7.94 26.24 C8.08 24.61 9.09 22.99 10.38 21.36 C11.67 19.73 13.84 17.83 15.67 16.47 C17.50 15.11 19.61 13.62 21.37 13.21 C23.14 12.80 25.04 13.21 26.26 14.03 C27.48 14.84 28.36 16.61 28.70 18.10 C29.04 19.59 28.37 22.17 28.30 22.99"/><path d="M31.15 9.96 C32.10 9.69 35.02 8.06 36.85 8.33 C38.68 8.60 41.12 10.10 42.14 11.59 C43.16 13.08 43.43 15.39 42.95 17.29 C42.48 19.19 40.85 21.23 39.29 22.99 C37.73 24.75 35.49 26.72 33.59 27.87 C31.69 29.02 29.79 29.91 27.89 29.91 C25.99 29.91 23.55 29.02 22.19 27.87 C20.83 26.72 19.75 24.62 19.75 22.99 C19.75 21.36 21.78 18.91 22.19 18.10"/></g></svg>
<div class="t" style="left:123.3px;top:1118.0px;font-size:32px;line-height:32px;letter-spacing:0.22px;color:#222222;">Z Rule Compare Historical …</div>
<div class="t" style="right:2296.0px;top:1121.1px;font-size:26.5px;line-height:26.5px;color:#222222;">8</div>
<div class="r" style="left:18.0px;top:1229.2px;width:614.0px;height:2.0px;background:#edf0f5;"></div>
<div class="r" style="left:18.0px;top:1166.5px;width:582.0px;height:64.2px;background:#2b6a1b;"></div>
<div class="r" style="left:42.2px;top:1186.1px;width:24.4px;height:24.4px;background:#fff;border:2.2px solid #7a7a7a;border-radius:5px;box-sizing:border-box;"></div>
<svg class="r" style="left:70.0px;top:1176.5px;width:50px;height:42px" viewBox="0 0 50 42"><g stroke="#fff" stroke-width="4.0" fill="none" stroke-linecap="round" stroke-linejoin="round">
<path d="M18.93 32.76 C18.12 32.89 15.61 33.84 14.05 33.57 C12.49 33.30 10.59 32.35 9.57 31.13 C8.55 29.91 7.81 27.87 7.94 26.24 C8.08 24.61 9.09 22.99 10.38 21.36 C11.67 19.73 13.84 17.83 15.67 16.47 C17.50 15.11 19.61 13.62 21.37 13.21 C23.14 12.80 25.04 13.21 26.26 14.03 C27.48 14.84 28.36 16.61 28.70 18.10 C29.04 19.59 28.37 22.17 28.30 22.99"/><path d="M31.15 9.96 C32.10 9.69 35.02 8.06 36.85 8.33 C38.68 8.60 41.12 10.10 42.14 11.59 C43.16 13.08 43.43 15.39 42.95 17.29 C42.48 19.19 40.85 21.23 39.29 22.99 C37.73 24.75 35.49 26.72 33.59 27.87 C31.69 29.02 29.79 29.91 27.89 29.91 C25.99 29.91 23.55 29.02 22.19 27.87 C20.83 26.72 19.75 24.62 19.75 22.99 C19.75 21.36 21.78 18.91 22.19 18.10"/></g></svg>
<div class="t" style="left:123.3px;top:1182.7px;font-size:32px;line-height:32px;letter-spacing:0.22px;color:#fff;">ZZ Historical Data</div>
<div class="t" style="right:2296.0px;top:1185.9px;font-size:26.5px;line-height:26.5px;color:#fff;">6</div>
<div class="r" style="left:18.0px;top:1294.0px;width:614.0px;height:2.0px;background:#edf0f5;"></div>
<div class="r" style="left:42.2px;top:1250.8px;width:24.4px;height:24.4px;background:#fff;border:2.2px solid #7a7a7a;border-radius:5px;box-sizing:border-box;"></div>
<svg class="r" style="left:70.0px;top:1241.2px;width:50px;height:42px" viewBox="0 0 50 42"><g stroke="#1a1a1a" stroke-width="4.0" fill="none" stroke-linecap="round" stroke-linejoin="round">
<path d="M18.93 32.76 C18.12 32.89 15.61 33.84 14.05 33.57 C12.49 33.30 10.59 32.35 9.57 31.13 C8.55 29.91 7.81 27.87 7.94 26.24 C8.08 24.61 9.09 22.99 10.38 21.36 C11.67 19.73 13.84 17.83 15.67 16.47 C17.50 15.11 19.61 13.62 21.37 13.21 C23.14 12.80 25.04 13.21 26.26 14.03 C27.48 14.84 28.36 16.61 28.70 18.10 C29.04 19.59 28.37 22.17 28.30 22.99"/><path d="M31.15 9.96 C32.10 9.69 35.02 8.06 36.85 8.33 C38.68 8.60 41.12 10.10 42.14 11.59 C43.16 13.08 43.43 15.39 42.95 17.29 C42.48 19.19 40.85 21.23 39.29 22.99 C37.73 24.75 35.49 26.72 33.59 27.87 C31.69 29.02 29.79 29.91 27.89 29.91 C25.99 29.91 23.55 29.02 22.19 27.87 C20.83 26.72 19.75 24.62 19.75 22.99 C19.75 21.36 21.78 18.91 22.19 18.10"/></g></svg>
<div class="t" style="left:123.3px;top:1247.5px;font-size:32px;line-height:32px;letter-spacing:0.22px;color:#222222;">ZZZ GIS</div>
<div class="t" style="right:2296.0px;top:1250.6px;font-size:26.5px;line-height:26.5px;color:#222222;">2</div>
<div class="r" style="left:664.4px;top:322.8px;width:614.6px;height:2.0px;background:#edf0f5;"></div>
<div class="r" style="left:690.2px;top:279.6px;width:24.4px;height:24.4px;background:#fff;border:2.2px solid #7a7a7a;border-radius:5px;box-sizing:border-box;"></div>
<div class="t" style="left:769.9px;top:276.2px;font-size:32px;line-height:32px;letter-spacing:0.22px;color:#222222;">Read API URL</div>
<div class="r" style="left:664.4px;top:387.5px;width:614.6px;height:2.0px;background:#edf0f5;"></div>
<div class="r" style="left:690.2px;top:344.4px;width:24.4px;height:24.4px;background:#fff;border:2.2px solid #7a7a7a;border-radius:5px;box-sizing:border-box;"></div>
<div class="t" style="left:772.0px;top:341.0px;font-size:32px;line-height:32px;letter-spacing:0.22px;color:#222222;">JSON Reader</div>
<div class="r" style="left:664.4px;top:452.2px;width:614.6px;height:2.0px;background:#edf0f5;"></div>
<div class="r" style="left:690.2px;top:409.1px;width:24.4px;height:24.4px;background:#fff;border:2.2px solid #7a7a7a;border-radius:5px;box-sizing:border-box;"></div>
<div class="t" style="left:770.9px;top:405.7px;font-size:32px;line-height:32px;letter-spacing:0.22px;color:#222222;">Chain Call G</div>
<div class="r" style="left:664.4px;top:517.0px;width:614.6px;height:2.0px;background:#edf0f5;"></div>
<div class="r" style="left:690.2px;top:473.9px;width:24.4px;height:24.4px;background:#fff;border:2.2px solid #7a7a7a;border-radius:5px;box-sizing:border-box;"></div>
<div class="t" style="left:770.9px;top:470.5px;font-size:32px;line-height:32px;letter-spacing:0.22px;color:#222222;">Chain Call H</div>
<div class="r" style="left:664.4px;top:581.8px;width:614.6px;height:2.0px;background:#edf0f5;"></div>
<div class="r" style="left:690.2px;top:538.6px;width:24.4px;height:24.4px;background:#fff;border:2.2px solid #7a7a7a;border-radius:5px;box-sizing:border-box;"></div>
<div class="t" style="left:769.9px;top:535.2px;font-size:32px;line-height:32px;letter-spacing:0.22px;color:#222222;">Date Extractor</div>
<div class="r" style="left:664.4px;top:646.5px;width:614.6px;height:2.0px;background:#edf0f5;"></div>
<div class="r" style="left:690.2px;top:603.4px;width:24.4px;height:24.4px;background:#fff;border:2.2px solid #7a7a7a;border-radius:5px;box-sizing:border-box;"></div>
<div class="t" style="left:769.9px;top:600.0px;font-size:32px;line-height:32px;letter-spacing:0.22px;color:#222222;">Rename Field</div>
<div class="r" style="left:664.4px;top:711.2px;width:614.6px;height:2.0px;background:#edf0f5;"></div>
<div class="r" style="left:690.2px;top:668.1px;width:24.4px;height:24.4px;background:#fff;border:2.2px solid #7a7a7a;border-radius:5px;box-sizing:border-box;"></div>
<div class="t" style="left:769.9px;top:664.7px;font-size:32px;line-height:32px;letter-spacing:0.22px;color:#222222;">Rename Field</div>
<div class="r" style="left:664.4px;top:776.0px;width:614.6px;height:2.0px;background:#edf0f5;"></div>
<div class="r" style="left:690.2px;top:732.9px;width:24.4px;height:24.4px;background:#fff;border:2.2px solid #7a7a7a;border-radius:5px;box-sizing:border-box;"></div>
<div class="t" style="left:769.9px;top:729.5px;font-size:32px;line-height:32px;letter-spacing:0.22px;color:#222222;">Rename Field</div>
<div class="r" style="left:664.4px;top:840.8px;width:614.6px;height:2.0px;background:#edf0f5;"></div>
<div class="r" style="left:690.2px;top:797.6px;width:24.4px;height:24.4px;background:#fff;border:2.2px solid #7a7a7a;border-radius:5px;box-sizing:border-box;"></div>
<div class="t" style="left:770.9px;top:794.2px;font-size:32px;line-height:32px;letter-spacing:0.22px;color:#222222;">Change Field Types</div>
<div class="r" style="left:664.4px;top:905.5px;width:614.6px;height:2.0px;background:#edf0f5;"></div>
<div class="r" style="left:690.2px;top:862.4px;width:24.4px;height:24.4px;background:#fff;border:2.2px solid #7a7a7a;border-radius:5px;box-sizing:border-box;"></div>
<div class="t" style="left:769.9px;top:859.0px;font-size:32px;line-height:32px;letter-spacing:0.22px;color:#222222;">Decode Weekday</div>
<div class="r" style="left:664.4px;top:970.2px;width:614.6px;height:2.0px;background:#edf0f5;"></div>
<div class="r" style="left:690.2px;top:927.1px;width:24.4px;height:24.4px;background:#fff;border:2.2px solid #7a7a7a;border-radius:5px;box-sizing:border-box;"></div>
<div class="t" style="left:770.9px;top:923.7px;font-size:32px;line-height:32px;letter-spacing:0.22px;color:#222222;">Chain Call I</div>
<div class="r" style="left:664.4px;top:1035.0px;width:614.6px;height:2.0px;background:#edf0f5;"></div>
<div class="r" style="left:690.2px;top:991.9px;width:24.4px;height:24.4px;background:#1e4a41;border-radius:5px;"></div>
<svg class="r" style="left:690.2px;top:991.9px;width:24.4px;height:24.4px" viewBox="0 0 24.4 24.4"><path d="M5 12.5 L10 17.5 L19.5 6.5" stroke="#fff" stroke-width="3.4" fill="none" stroke-linecap="round" stroke-linejoin="round"/></svg>
<div class="t" style="left:764.2px;top:988.5px;font-size:32px;line-height:32px;letter-spacing:0.22px;color:#222222;">Rename Field carpark_n…</div>
<svg class="r" style="left:1168.0px;top:987.2px;width:33px;height:33px" viewBox="0 0 33 33"><path d="M4 29 L5.5 22 L22 5.5 L27.5 11 L11 27.5 Z" stroke="#222" stroke-width="2.8" fill="none" stroke-linejoin="round"/>
<path d="M22.5 5 L25 2.5 Q26.5 1 28 2.5 L30.5 5 Q32 6.5 30.5 8 L28 10.5 Z" fill="#a0a0a0"/>
<path d="M18.5 9 L24 14.5" stroke="#222" stroke-width="2.4"/></svg>
<svg class="r" style="left:1209.0px;top:991.2px;width:24px;height:25px" viewBox="0 0 24 25"><path d="M2 2.5 Q2 1 3.5 1.8 L17 11 Q18.5 12.5 17 14 L3.5 23.2 Q2 24 2 22.5 Z" fill="#333"/><rect x="18.8" y="1" width="3.6" height="23" rx="1.2" fill="#333"/></svg>
<div class="r" style="left:1247.2px;top:972.2px;width:32.1px;height:64.3px;background:#cfd9e6;"></div>
<svg class="r" style="left:1247.2px;top:972.2px;width:32px;height:64px" viewBox="0 0 32 64"><g fill="#333"><circle cx="9.3" cy="28.8" r="2.3"/><circle cx="17.5" cy="28.8" r="2.3"/><circle cx="25.6" cy="28.8" r="2.3"/></g><g fill="#9a9fa5"><circle cx="9.3" cy="36.8" r="2.2"/><circle cx="17.5" cy="36.8" r="2.2"/><circle cx="25.6" cy="36.8" r="2.2"/></g></svg>
<div class="r" style="left:1346.8px;top:260.0px;width:2.0px;height:1136.0px;background:#edf0f5;"></div>
<div class="r" style="left:1535.0px;top:260.0px;width:2.0px;height:1136.0px;background:#edf0f5;"></div>
<div class="r" style="left:1807.0px;top:260.0px;width:2.0px;height:1136.0px;background:#edf0f5;"></div>
<div class="r" style="left:1964.7px;top:260.0px;width:2.0px;height:1136.0px;background:#edf0f5;"></div>
<div class="r" style="left:2102.0px;top:260.0px;width:2.0px;height:1136.0px;background:#edf0f5;"></div>
<div class="r" style="left:2329.0px;top:260.0px;width:2.0px;height:1136.0px;background:#edf0f5;"></div>
<div class="r" style="left:2431.5px;top:260.0px;width:2.0px;height:1136.0px;background:#edf0f5;"></div>
<div class="r" style="left:2675.0px;top:260.0px;width:2.0px;height:1136.0px;background:#edf0f5;"></div>
<div class="r" style="left:1298.0px;top:324.0px;width:1560.0px;height:2.0px;background:#edf0f5;"></div>
<div class="r" style="left:1298.0px;top:452.6px;width:1560.0px;height:2.0px;background:#edf0f5;"></div>
<div class="r" style="left:1298.0px;top:581.2px;width:1560.0px;height:2.0px;background:#edf0f5;"></div>
<div class="r" style="left:1298.0px;top:709.8px;width:1560.0px;height:2.0px;background:#edf0f5;"></div>
<div class="r" style="left:1298.0px;top:838.4px;width:1560.0px;height:2.0px;background:#edf0f5;"></div>
<div class="r" style="left:1298.0px;top:967.0px;width:1560.0px;height:2.0px;background:#edf0f5;"></div>
<div class="r" style="left:1298.0px;top:1095.6px;width:1560.0px;height:2.0px;background:#edf0f5;"></div>
<div class="r" style="left:1298.0px;top:1224.2px;width:1560.0px;height:2.0px;background:#edf0f5;"></div>
<div class="r" style="left:1298.0px;top:1352.8px;width:1560.0px;height:2.0px;background:#edf0f5;"></div>
<div class="t" style="left:1361.3px;top:275.9px;font-size:32px;line-height:32px;font-weight:bold;-webkit-text-stroke:0;letter-spacing:0.22px;color:#222222;">timestamp</div>
<div class="t" style="left:1542.5px;top:275.9px;font-size:32px;line-height:32px;font-weight:bold;-webkit-text-stroke:0;letter-spacing:0.22px;color:#222222;">update_datetime</div>
<div class="t" style="left:1816.1px;top:275.9px;font-size:32px;line-height:32px;font-weight:bold;-webkit-text-stroke:0;letter-spacing:0.22px;color:#222222;">total_lots</div>
<div class="t" style="left:1973.1px;top:275.9px;font-size:32px;line-height:32px;font-weight:bold;-webkit-text-stroke:0;letter-spacing:0.22px;color:#222222;">lot_type</div>
<div class="t" style="left:2110.4px;top:275.9px;font-size:32px;line-height:32px;font-weight:bold;-webkit-text-stroke:0;letter-spacing:0.22px;color:#222222;">lots_available</div>
<div class="t" style="left:2337.2px;top:275.9px;font-size:32px;line-height:32px;font-weight:bold;-webkit-text-stroke:0;letter-spacing:0.22px;color:#222222;">result</div>
<div class="t" style="left:2439.6px;top:275.9px;font-size:32px;line-height:32px;font-weight:bold;-webkit-text-stroke:0;letter-spacing:0.22px;color:#222222;">timestampYear</div>
<div class="t" style="left:2685.2px;top:275.9px;font-size:32px;line-height:32px;font-weight:bold;-webkit-text-stroke:0;letter-spacing:0.22px;color:#222222;">timestampQuarter</div>
<div class="t" style="left:1313.0px;top:373.5px;font-size:32px;line-height:32px;font-weight:bold;-webkit-text-stroke:0;letter-spacing:0.22px;color:#222222;">1</div>
<div class="t" style="left:1360.6px;top:337.7px;font-size:32px;line-height:32px;letter-spacing:0.22px;color:#800080;">12/17/2024</div>
<div class="t" style="left:1360.1px;top:374.5px;font-size:32px;line-height:32px;letter-spacing:0.22px;color:#800080;">6:00:33</div>
<div class="t" style="left:1360.7px;top:411.3px;font-size:32px;line-height:32px;letter-spacing:0.22px;color:#800080;">PM</div>
<div class="t" style="left:1549.3px;top:337.7px;font-size:32px;line-height:32px;letter-spacing:0.22px;color:#800080;">12/18/2024</div>
<div class="t" style="left:1550.6px;top:374.5px;font-size:32px;line-height:32px;letter-spacing:0.22px;color:#800080;">1:59:28 AM</div>
<div class="t" style="left:1822.6px;top:337.7px;font-size:32px;line-height:32px;letter-spacing:0.22px;color:#10108a;">105</div>
<div class="t" style="left:1978.4px;top:337.7px;font-size:32px;line-height:32px;letter-spacing:0.22px;color:#333;">C</div>
<div class="t" style="left:2117.4px;top:337.7px;font-size:32px;line-height:32px;letter-spacing:0.22px;color:#10108a;">86</div>
<div class="t" style="left:2345.0px;top:337.7px;font-size:32px;line-height:32px;letter-spacing:0.22px;color:#256414;">false</div>
<div class="t" style="left:2444.9px;top:337.7px;font-size:32px;line-height:32px;letter-spacing:0.22px;color:#10108a;">2024</div>
<div class="t" style="left:2689.3px;top:337.7px;font-size:32px;line-height:32px;letter-spacing:0.22px;color:#10108a;">4</div>
<div class="t" style="left:1313.9px;top:502.1px;font-size:32px;line-height:32px;font-weight:bold;-webkit-text-stroke:0;letter-spacing:0.22px;color:#222222;">2</div>
<div class="t" style="left:1360.6px;top:466.3px;font-size:32px;line-height:32px;letter-spacing:0.22px;color:#800080;">12/17/2024</div>
<div class="t" style="left:1360.1px;top:503.1px;font-size:32px;line-height:32px;letter-spacing:0.22px;color:#800080;">6:00:33</div>
<div class="t" style="left:1360.7px;top:539.9px;font-size:32px;line-height:32px;letter-spacing:0.22px;color:#800080;">PM</div>
<div class="t" style="left:1549.3px;top:466.3px;font-size:32px;line-height:32px;letter-spacing:0.22px;color:#800080;">12/18/2024</div>
<div class="t" style="left:1550.6px;top:503.1px;font-size:32px;line-height:32px;letter-spacing:0.22px;color:#800080;">1:59:29 AM</div>
<div class="t" style="left:1823.7px;top:466.3px;font-size:32px;line-height:32px;letter-spacing:0.22px;color:#10108a;">583</div>
<div class="t" style="left:1978.4px;top:466.3px;font-size:32px;line-height:32px;letter-spacing:0.22px;color:#333;">C</div>
<div class="t" style="left:2117.2px;top:466.3px;font-size:32px;line-height:32px;letter-spacing:0.22px;color:#10108a;">220</div>
<div class="t" style="left:2345.0px;top:466.3px;font-size:32px;line-height:32px;letter-spacing:0.22px;color:#256414;">false</div>
<div class="t" style="left:2444.9px;top:466.3px;font-size:32px;line-height:32px;letter-spacing:0.22px;color:#10108a;">2024</div>
<div class="t" style="left:2689.3px;top:466.3px;font-size:32px;line-height:32px;letter-spacing:0.22px;color:#10108a;">4</div>
<div class="t" style="left:1314.3px;top:630.7px;font-size:32px;line-height:32px;font-weight:bold;-webkit-text-stroke:0;letter-spacing:0.22px;color:#222222;">3</div>
<div class="t" style="left:1360.6px;top:594.9px;font-size:32px;line-height:32px;letter-spacing:0.22px;color:#800080;">12/17/2024</div>
<div class="t" style="left:1360.1px;top:631.7px;font-size:32px;line-height:32px;letter-spacing:0.22px;color:#800080;">6:00:33</div>
<div class="t" style="left:1360.7px;top:668.5px;font-size:32px;line-height:32px;letter-spacing:0.22px;color:#800080;">PM</div>
<div class="t" style="left:1549.3px;top:594.9px;font-size:32px;line-height:32px;letter-spacing:0.22px;color:#800080;">12/18/2024</div>
<div class="t" style="left:1550.6px;top:631.7px;font-size:32px;line-height:32px;letter-spacing:0.22px;color:#800080;">1:59:28 AM</div>
<div class="t" style="left:1823.8px;top:594.9px;font-size:32px;line-height:32px;letter-spacing:0.22px;color:#10108a;">329</div>
<div class="t" style="left:1978.4px;top:594.9px;font-size:32px;line-height:32px;letter-spacing:0.22px;color:#333;">C</div>
<div class="t" style="left:2116.4px;top:594.9px;font-size:32px;line-height:32px;letter-spacing:0.22px;color:#10108a;">183</div>
<div class="t" style="left:2345.0px;top:594.9px;font-size:32px;line-height:32px;letter-spacing:0.22px;color:#256414;">false</div>
<div class="t" style="left:2444.9px;top:594.9px;font-size:32px;line-height:32px;letter-spacing:0.22px;color:#10108a;">2024</div>
<div class="t" style="left:2689.3px;top:594.9px;font-size:32px;line-height:32px;letter-spacing:0.22px;color:#10108a;">4</div>
<div class="t" style="left:1314.5px;top:759.3px;font-size:32px;line-height:32px;font-weight:bold;-webkit-text-stroke:0;letter-spacing:0.22px;color:#222222;">4</div>
<div class="t" style="left:1360.6px;top:723.5px;font-size:32px;line-height:32px;letter-spacing:0.22px;color:#800080;">12/17/2024</div>
<div class="t" style="left:1360.1px;top:760.3px;font-size:32px;line-height:32px;letter-spacing:0.22px;color:#800080;">6:00:33</div>
<div class="t" style="left:1360.7px;top:797.1px;font-size:32px;line-height:32px;letter-spacing:0.22px;color:#800080;">PM</div>
<div class="t" style="left:1549.3px;top:723.5px;font-size:32px;line-height:32px;letter-spacing:0.22px;color:#800080;">12/18/2024</div>
<div class="t" style="left:1550.6px;top:760.3px;font-size:32px;line-height:32px;letter-spacing:0.22px;color:#800080;">1:59:17 AM</div>
<div class="t" style="left:1823.5px;top:723.5px;font-size:32px;line-height:32px;letter-spacing:0.22px;color:#10108a;">97</div>
<div class="t" style="left:1978.4px;top:723.5px;font-size:32px;line-height:32px;letter-spacing:0.22px;color:#333;">C</div>
<div class="t" style="left:2117.6px;top:723.5px;font-size:32px;line-height:32px;letter-spacing:0.22px;color:#10108a;">34</div>
<div class="t" style="left:2345.0px;top:723.5px;font-size:32px;line-height:32px;letter-spacing:0.22px;color:#256414;">false</div>
<div class="t" style="left:2444.9px;top:723.5px;font-size:32px;line-height:32px;letter-spacing:0.22px;color:#10108a;">2024</div>
<div class="t" style="left:2689.3px;top:723.5px;font-size:32px;line-height:32px;letter-spacing:0.22px;color:#10108a;">4</div>
<div class="t" style="left:1314.0px;top:887.9px;font-size:32px;line-height:32px;font-weight:bold;-webkit-text-stroke:0;letter-spacing:0.22px;color:#222222;">5</div>
<div class="t" style="left:1360.6px;top:852.1px;font-size:32px;line-height:32px;letter-spacing:0.22px;color:#800080;">12/17/2024</div>
<div class="t" style="left:1360.1px;top:888.9px;font-size:32px;line-height:32px;letter-spacing:0.22px;color:#800080;">6:00:33</div>
<div class="t" style="left:1360.7px;top:925.7px;font-size:32px;line-height:32px;letter-spacing:0.22px;color:#800080;">PM</div>
<div class="t" style="left:1549.3px;top:852.1px;font-size:32px;line-height:32px;letter-spacing:0.22px;color:#800080;">12/18/2024</div>
<div class="t" style="left:1550.6px;top:888.9px;font-size:32px;line-height:32px;letter-spacing:0.22px;color:#800080;">1:59:29 AM</div>
<div class="t" style="left:1823.5px;top:852.1px;font-size:32px;line-height:32px;letter-spacing:0.22px;color:#10108a;">97</div>
<div class="t" style="left:1978.4px;top:852.1px;font-size:32px;line-height:32px;letter-spacing:0.22px;color:#333;">C</div>
<div class="t" style="left:2116.4px;top:852.1px;font-size:32px;line-height:32px;letter-spacing:0.22px;color:#10108a;">16</div>
<div class="t" style="left:2345.0px;top:852.1px;font-size:32px;line-height:32px;letter-spacing:0.22px;color:#256414;">false</div>
<div class="t" style="left:2444.9px;top:852.1px;font-size:32px;line-height:32px;letter-spacing:0.22px;color:#10108a;">2024</div>
<div class="t" style="left:2689.3px;top:852.1px;font-size:32px;line-height:32px;letter-spacing:0.22px;color:#10108a;">4</div>
<div class="t" style="left:1313.8px;top:1016.5px;font-size:32px;line-height:32px;font-weight:bold;-webkit-text-stroke:0;letter-spacing:0.22px;color:#222222;">6</div>
<div class="t" style="left:1360.6px;top:980.7px;font-size:32px;line-height:32px;letter-spacing:0.22px;color:#800080;">12/17/2024</div>
<div class="t" style="left:1360.1px;top:1017.5px;font-size:32px;line-height:32px;letter-spacing:0.22px;color:#800080;">6:00:33</div>
<div class="t" style="left:1360.7px;top:1054.3px;font-size:32px;line-height:32px;letter-spacing:0.22px;color:#800080;">PM</div>
<div class="t" style="left:1549.3px;top:980.7px;font-size:32px;line-height:32px;letter-spacing:0.22px;color:#800080;">12/18/2024</div>
<div class="t" style="left:1550.6px;top:1017.5px;font-size:32px;line-height:32px;letter-spacing:0.22px;color:#800080;">1:59:12 AM</div>
<div class="t" style="left:1822.6px;top:980.7px;font-size:32px;line-height:32px;letter-spacing:0.22px;color:#10108a;">176</div>
<div class="t" style="left:1978.4px;top:980.7px;font-size:32px;line-height:32px;letter-spacing:0.22px;color:#333;">C</div>
<div class="t" style="left:2118.1px;top:980.7px;font-size:32px;line-height:32px;letter-spacing:0.22px;color:#10108a;">44</div>
<div class="t" style="left:2345.0px;top:980.7px;font-size:32px;line-height:32px;letter-spacing:0.22px;color:#256414;">false</div>
<div class="t" style="left:2444.9px;top:980.7px;font-size:32px;line-height:32px;letter-spacing:0.22px;color:#10108a;">2024</div>
<div class="t" style="left:2689.3px;top:980.7px;font-size:32px;line-height:32px;letter-spacing:0.22px;color:#10108a;">4</div>
<div class="t" style="left:1313.6px;top:1145.1px;font-size:32px;line-height:32px;font-weight:bold;-webkit-text-stroke:0;letter-spacing:0.22px;color:#222222;">7</div>
<div class="t" style="left:1360.6px;top:1109.3px;font-size:32px;line-height:32px;letter-spacing:0.22px;color:#800080;">12/17/2024</div>
<div class="t" style="left:1360.1px;top:1146.1px;font-size:32px;line-height:32px;letter-spacing:0.22px;color:#800080;">6:00:33</div>
<div class="t" style="left:1360.7px;top:1182.9px;font-size:32px;line-height:32px;letter-spacing:0.22px;color:#800080;">PM</div>
<div class="t" style="left:1549.3px;top:1109.3px;font-size:32px;line-height:32px;letter-spacing:0.22px;color:#800080;">12/18/2024</div>
<div class="t" style="left:1550.6px;top:1146.1px;font-size:32px;line-height:32px;letter-spacing:0.22px;color:#800080;">1:59:25 AM</div>
<div class="t" style="left:1823.4px;top:1109.3px;font-size:32px;line-height:32px;letter-spacing:0.22px;color:#10108a;">228</div>
<div class="t" style="left:1978.4px;top:1109.3px;font-size:32px;line-height:32px;letter-spacing:0.22px;color:#333;">C</div>
<div class="t" style="left:2116.4px;top:1109.3px;font-size:32px;line-height:32px;letter-spacing:0.22px;color:#10108a;">170</div>
<div class="t" style="left:2345.0px;top:1109.3px;font-size:32px;line-height:32px;letter-spacing:0.22px;color:#256414;">false</div>
<div class="t" style="left:2444.9px;top:1109.3px;font-size:32px;line-height:32px;letter-spacing:0.22px;color:#10108a;">2024</div>
<div class="t" style="left:2689.3px;top:1109.3px;font-size:32px;line-height:32px;letter-spacing:0.22px;color:#10108a;">4</div>
<div class="t" style="left:1314.0px;top:1273.7px;font-size:32px;line-height:32px;font-weight:bold;-webkit-text-stroke:0;letter-spacing:0.22px;color:#222222;">8</div>
<div class="t" style="left:1360.6px;top:1237.9px;font-size:32px;line-height:32px;letter-spacing:0.22px;color:#800080;">12/17/2024</div>
<div class="t" style="left:1360.1px;top:1274.7px;font-size:32px;line-height:32px;letter-spacing:0.22px;color:#800080;">6:00:33</div>
<div class="t" style="left:1360.7px;top:1311.5px;font-size:32px;line-height:32px;letter-spacing:0.22px;color:#800080;">PM</div>
<div class="t" style="left:1549.3px;top:1237.9px;font-size:32px;line-height:32px;letter-spacing:0.22px;color:#800080;">12/1/2024</div>
<div class="t" style="left:1552.3px;top:1274.7px;font-size:32px;line-height:32px;letter-spacing:0.22px;color:#800080;">4:05:29 PM</div>
<div class="t" style="left:1823.4px;top:1237.9px;font-size:32px;line-height:32px;letter-spacing:0.22px;color:#10108a;">289</div>
<div class="t" style="left:1978.4px;top:1237.9px;font-size:32px;line-height:32px;letter-spacing:0.22px;color:#333;">C</div>
<div class="t" style="left:2117.2px;top:1237.9px;font-size:32px;line-height:32px;letter-spacing:0.22px;color:#10108a;">288</div>
<div class="t" style="left:2345.0px;top:1237.9px;font-size:32px;line-height:32px;letter-spacing:0.22px;color:#256414;">false</div>
<div class="t" style="left:2444.9px;top:1237.9px;font-size:32px;line-height:32px;letter-spacing:0.22px;color:#10108a;">2024</div>
<div class="t" style="left:2689.3px;top:1237.9px;font-size:32px;line-height:32px;letter-spacing:0.22px;color:#10108a;">4</div>
<div class="r" style="left:2858.0px;top:260.0px;width:22.0px;height:1136.0px;background:#eef1f6;"></div>
<div class="r" style="left:2858.5px;top:261.0px;width:21.0px;height:189.6px;background:#c0c3c8;border-radius:11px;"></div>
<div class="r" style="left:0.0px;top:1396.0px;width:2857.5px;height:30.5px;background:#ebeff6;"></div>
<div class="r" style="left:2857.5px;top:1396.0px;width:22.5px;height:30.5px;background:#ffffff;"></div>
<div class="r" style="left:0.0px;top:1396.0px;width:1261.4px;height:29.0px;background:#c0c3c8;border-radius:14.5px;"></div>
<div class="r" style="left:0.0px;top:1426.5px;width:2880.0px;height:83.5px;background:#cfdae6;"></div>
<div class="t" style="left:12.8px;top:1449.7px;font-size:33.5px;line-height:33.5px;color:#222222;">Showing 1-50 of 2455</div>
<div class="r" style="left:2412.0px;top:1427.7px;width:48.0px;height:71.7px;background:#a9bcd3;"></div>
<div class="t" style="left:2412.0px;width:48.0px;text-align:center;top:1442.3px;font-size:41px;line-height:41px;color:#222222;">1</div>
<div class="r" style="left:2478.6px;top:1427.7px;width:47.7px;height:71.7px;background:#bdcbdc;"></div>
<div class="t" style="left:2478.6px;width:47.7px;text-align:center;top:1442.3px;font-size:41px;line-height:41px;color:#222222;">2</div>
<div class="r" style="left:2544.4px;top:1427.7px;width:49.0px;height:71.7px;background:#bdcbdc;"></div>
<div class="t" style="left:2544.4px;width:49.0px;text-align:center;top:1442.3px;font-size:41px;line-height:41px;color:#222222;">3</div>
<div class="r" style="left:2610.5px;top:1427.7px;width:48.9px;height:71.7px;background:#bdcbdc;"></div>
<div class="t" style="left:2610.5px;width:48.9px;text-align:center;top:1442.3px;font-size:41px;line-height:41px;color:#222222;">4</div>
<div class="r" style="left:2678.0px;top:1427.7px;width:69.5px;height:71.7px;background:#bdcbdc;"></div>
<div class="t" style="left:2678.0px;width:69.5px;text-align:center;top:1442.3px;font-size:41px;line-height:41px;color:#222222;">50</div>
<div class="r" style="left:2766.0px;top:1427.7px;width:47.6px;height:71.7px;background:#c8d4e2;"></div>
<div class="t" style="left:2766.0px;width:47.6px;text-align:center;top:1442.3px;font-size:41px;line-height:41px;color:#8a8a8a;"><</div>
<div class="r" style="left:2832.0px;top:1427.7px;width:48.0px;height:71.7px;background:#bdcbdc;"></div>
<div class="t" style="left:2832.0px;width:48.0px;text-align:center;top:1442.3px;font-size:41px;line-height:41px;color:#222222;">></div>
</body></html>
